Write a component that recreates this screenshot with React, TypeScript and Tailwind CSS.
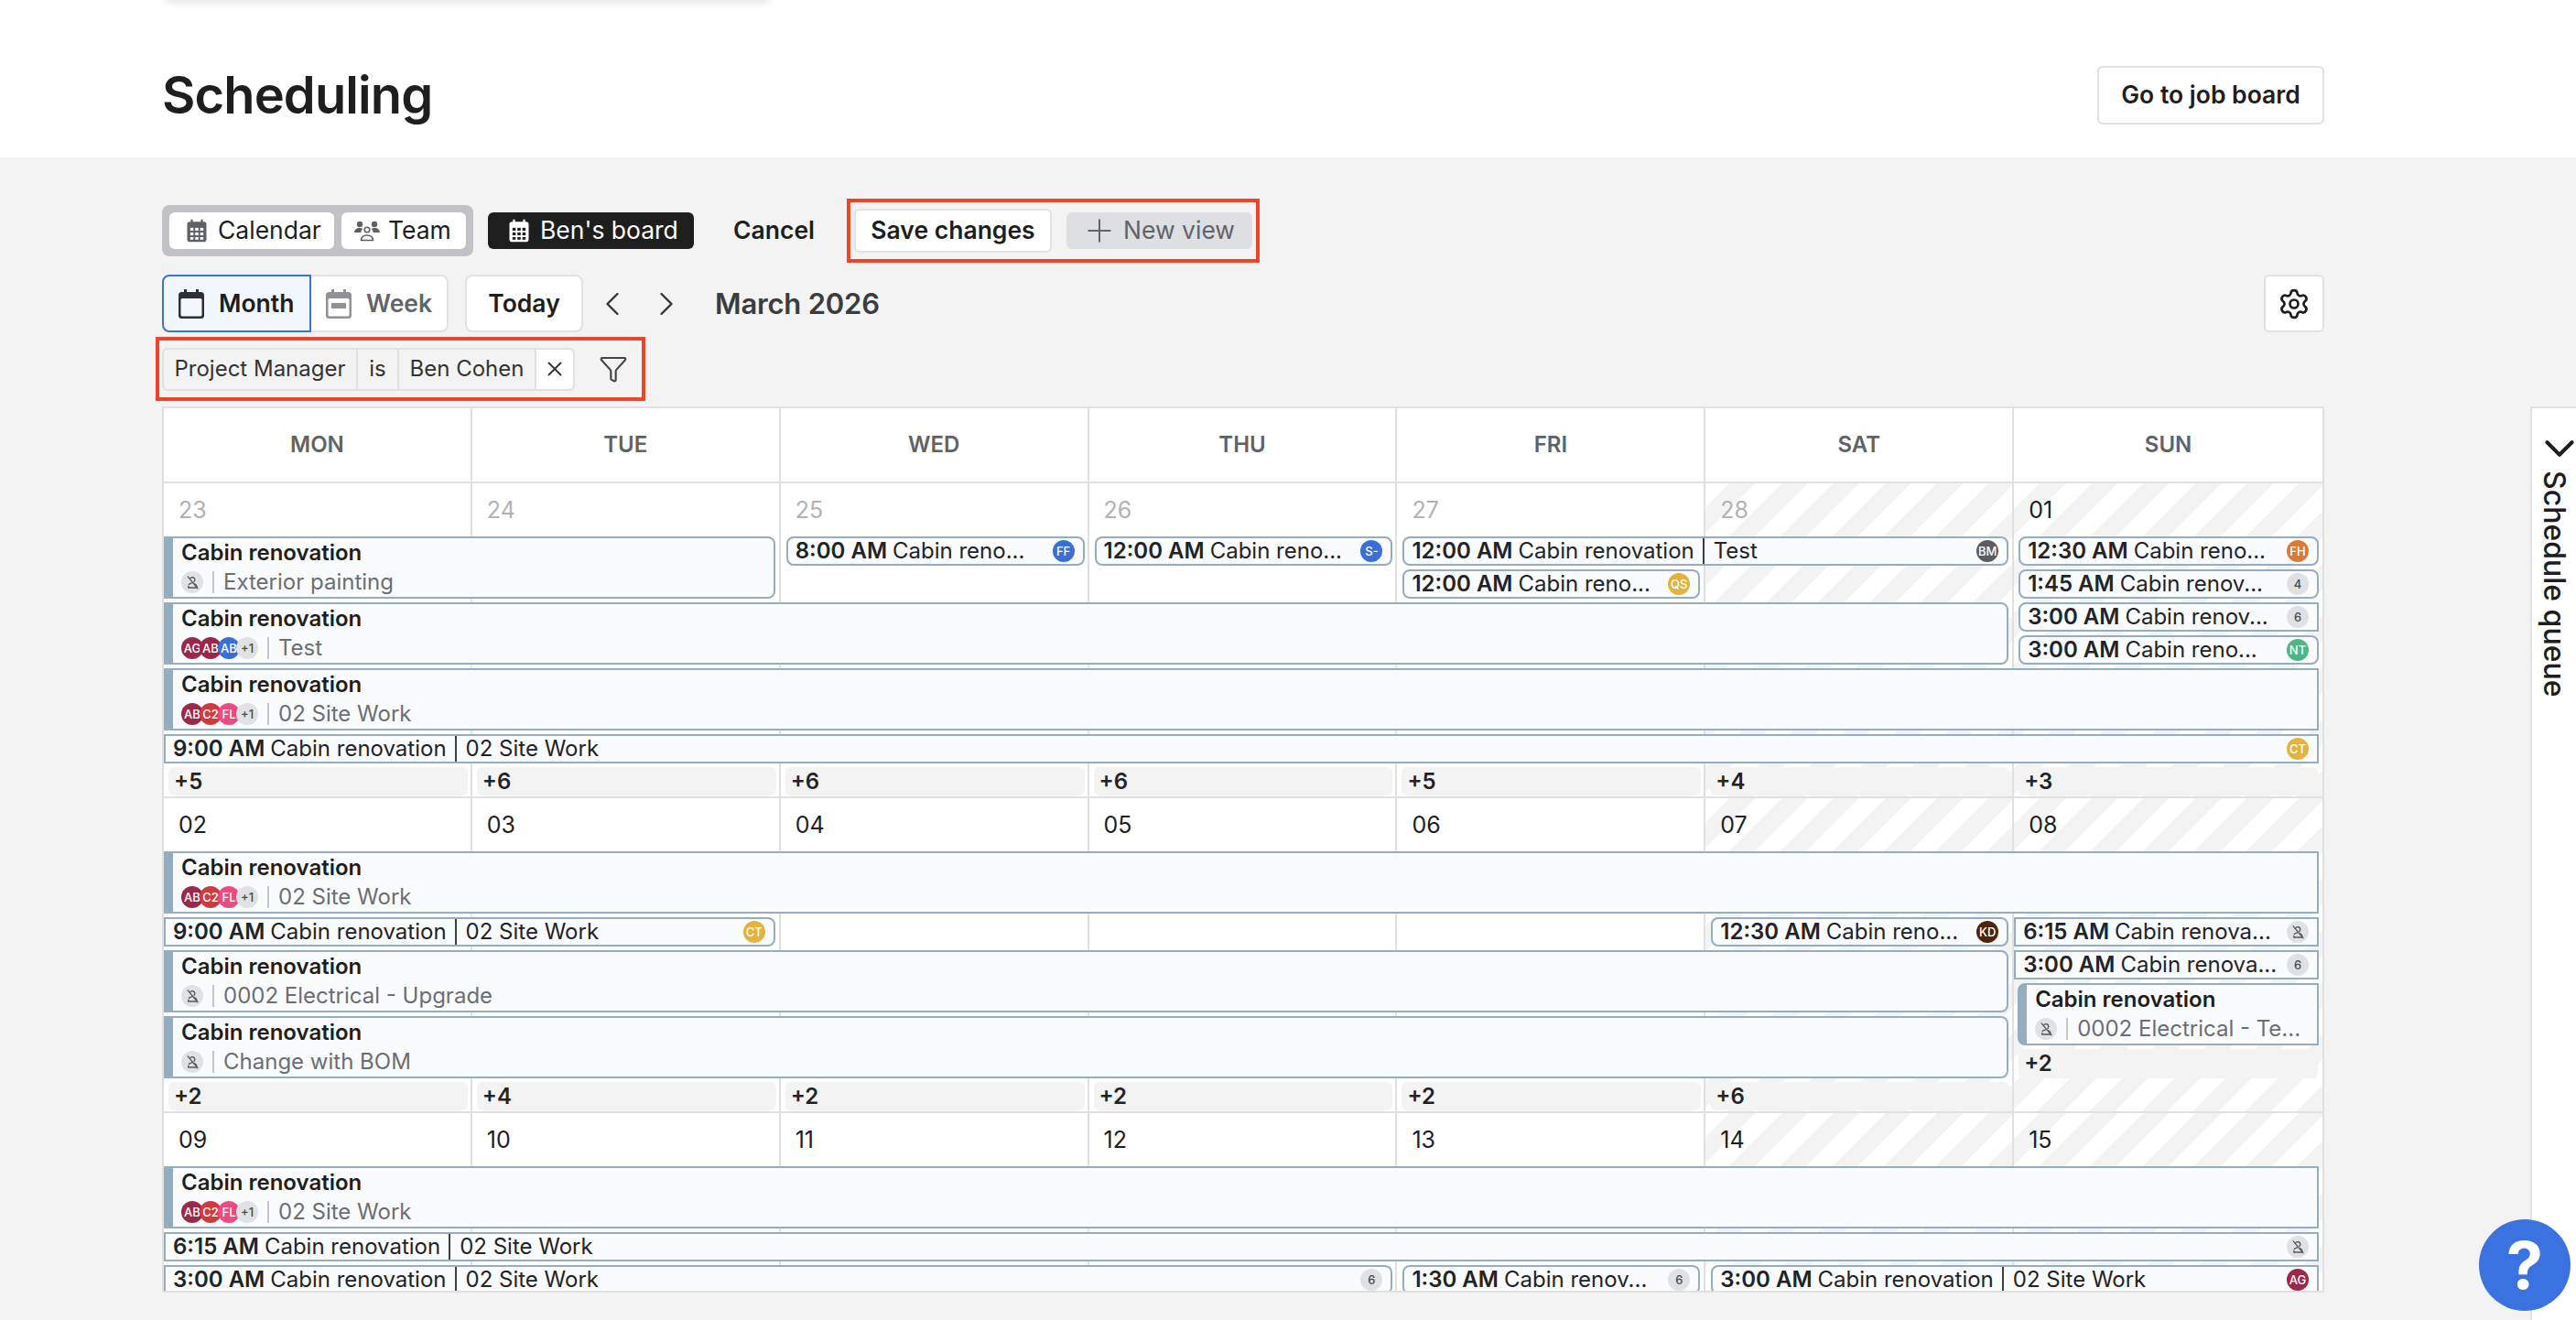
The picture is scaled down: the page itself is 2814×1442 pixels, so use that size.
import { ChevronDown, ChevronLeft, ChevronRight, Filter, Plus, Settings, X } from 'lucide-react'
import type { ReactNode } from 'react'

type Av = { t: string; c?: string } | 'none'

const CRIMSON = 'bg-[#9c2748]'

function NoUser() {
  return (
    <span className="flex h-[24px] w-[24px] shrink-0 items-center justify-center rounded-full bg-[#e0e1e5]">
      <svg viewBox="0 0 16 16" className="h-[17px] w-[17px]" fill="none" stroke="#55585c" strokeWidth="1.3" strokeLinecap="round">
        <path d="M5.6 3.4a2.6 2.6 0 0 1 4.6 1.6c0 .8-.3 1.4-.8 1.9" />
        <path d="M4 9.8c1-.9 2.1-1.3 3.3-1.4M9.6 9c1.2.3 2.2 1.2 2.6 2.6v1.6H3.6v-1.6" />
        <path d="M3 1.8l10 12" />
      </svg>
    </span>
  )
}

function Avatar({ a, stacked }: { a: Av; stacked?: boolean }) {
  if (a === 'none') return <NoUser />
  return (
    <span
      className={`flex h-[24px] w-[24px] shrink-0 items-center justify-center overflow-hidden rounded-full text-[13px] font-medium leading-none ${
        stacked ? 'ml-[-4px] first:ml-0' : ''
      } ${a.c ?? 'bg-[#e0e1e5] text-[#45484c]'} ${a.c ? 'text-white' : ''}`}
    >
      {a.t}
    </span>
  )
}

// two line bar with the accent on the left
function Bar({ pos, sub, avs, shape = '' }: { pos: string; sub: string; avs: Av[]; shape?: string }) {
  return (
    <div className={`${pos} z-10 flex min-w-0 flex-col border-2 border-l-[10px] border-[#94aebf] bg-[#fafbfd] pl-[9px] ${shape}`}>
      <div className="mt-[1px] truncate text-[24px] font-semibold leading-[30px] text-[#1e1e1e]">Cabin renovation</div>
      <div className="mt-[2px] flex items-center">
        <span className="flex">
          {avs.map((a, i) => (
            <Avatar key={i} a={a} stacked />
          ))}
        </span>
        <span className="mx-[10px] h-[24px] w-[2px] bg-[#c6c6c8]" />
        <span className="truncate text-[24px] leading-[30px] text-[#6b6e73]">{sub}</span>
      </div>
    </div>
  )
}

// one line event, with an optional second part after a divider
function Chip({ pos, time, title, sub, av, shape = 'rounded-[8px]' }: { pos: string; time: string; title: string; sub?: string; av?: Av; shape?: string }) {
  return (
    <div className={`${pos} z-10 flex min-w-0 items-center border-2 border-[#94aebf] bg-[#fafbfd] pl-[8px] pr-[9px] text-[24px] leading-[28px] text-[#222326] ${shape}`}>
      {time && <span className="mr-[6px] shrink-0 font-semibold">{time}</span>}
      <span className="shrink-0 whitespace-nowrap">{title}</span>
      {sub && (
        <>
          <span className="ml-[9px] mr-[10px] h-full w-[2px] shrink-0 bg-[#3c3f42]" />
          <span className="shrink-0 whitespace-nowrap">{sub}</span>
        </>
      )}
      <span className="flex-1" />
      {av && <Avatar a={av} />}
    </div>
  )
}

function More({ col, n }: { col: string; n: string }) {
  return (
    <div className={`${col} row-start-9 z-10 mx-[5px] mb-[1px] flex items-center rounded-[6px] bg-[#f3f3f3] pl-[6px] text-[24px] font-semibold leading-none text-[#222326]`}>
      {n}
    </div>
  )
}

const cols = ['col-start-1', 'col-start-2', 'col-start-3', 'col-start-4', 'col-start-5', 'col-start-6', 'col-start-7']

function Week({ dates, muted = 0, children }: { dates: string[]; muted?: number; children: ReactNode }) {
  return (
    <div className="grid h-[344px] shrink-0 grid-cols-7 grid-rows-[54px_repeat(8,32px)] gap-y-[4px] border-b-2 border-[#e0e0e0]">
      {dates.map((d, i) => (
        <div
          key={d}
          className={`${cols[i]} row-start-1 row-span-9 border-[#e0e0e0] ${i < 6 ? 'border-r-2' : ''} ${
            i > 4 ? 'bg-[repeating-linear-gradient(-45deg,#f3f3f3_0,#f3f3f3_20px,#ffffff_20px,#ffffff_40px)]' : 'bg-white'
          }`}
        />
      ))}
      {dates.map((d, i) => (
        <div key={d} className={`${cols[i]} row-start-1 z-10 pl-[16px] pt-[13px] text-[25px] leading-[32px] ${i < muted ? 'text-[#b2b2b4]' : 'text-[#1e1e1e]'}`}>
          {d}
        </div>
      ))}
      {children}
    </div>
  )
}

const SITE: Av[] = [
  { t: 'AB', c: CRIMSON },
  { t: 'C2', c: 'bg-[#cf3a3c]' },
  { t: 'FL', c: 'bg-[#ec4a80]' },
  { t: '+1' },
]

function CalIcon({ className, cut }: { className: string; cut: string }) {
  return (
    <svg viewBox="0 0 16 16" className={className} fill="currentColor">
      <path d="M4.2 1h1.3v1.4h5V1h1.3v1.4h.7c.8 0 1.500.7 1.500 1.500v9.600c0 .8-.7 1.500-1.500 1.500H3.500c-.8 0-1.500-.7-1.500-1.500V3.900c0-.8.7-1.500 1.500-1.500h.7z" />
      <g fill={cut}>
        <rect x="3.9" y="6.200" width="2" height="1.800" />
        <rect x="7" y="6.200" width="2" height="1.800" />
        <rect x="10.100" y="6.200" width="2" height="1.800" />
        <rect x="3.9" y="9.100" width="2" height="1.800" />
        <rect x="7" y="9.100" width="2" height="1.800" />
        <rect x="10.100" y="9.100" width="2" height="1.800" />
        <rect x="3.9" y="12" width="2" height="1.600" />
        <rect x="7" y="12" width="2" height="1.600" />
        <rect x="10.100" y="12" width="2" height="1.600" />
      </g>
    </svg>
  )
}

export default function App() {
  return (
    <div className="relative flex h-[1442px] flex-col overflow-hidden bg-white font-['Inter',sans-serif] text-[#1e1e1e]">
      <div className="absolute left-[180px] top-[-6px] h-[6px] w-[660px] shadow-[0_2px_8px_rgba(0,0,0,0.14)]" />

      <header className="flex h-[172px] shrink-0 items-center justify-between pl-[177px] pr-[275px] pt-[36px]">
        <h1 className="text-[56px] font-semibold leading-none tracking-[-0.9px] text-[#1e1e1e]">Scheduling</h1>
        <button className="h-[64px] w-[248px] rounded-[6px] border-2 border-[#e0e0e5] text-[26.5px] font-semibold">Go to job board</button>
      </header>

      <main className="flex min-h-0 flex-1 bg-[#f3f3f3]">
        <div className="w-[2764px] shrink-0 pl-[177px] pr-[225px] pt-[45px]">
          {/* view tabs */}
          <div className="flex h-[70px] items-center">
            <div className="flex h-[56px] items-center gap-[8px] rounded-[8px] bg-[#c2c2c6] px-[8px] text-[26.5px]">
              <span className="flex h-[40px] w-[180px] items-center gap-[9px] rounded-[6px] bg-white pl-[16px]">
                <CalIcon className="h-[28px] w-[28px] text-[#5d6064]" cut="#fff" /> Calendar
              </span>
              <span className="flex h-[40px] w-[136px] items-center gap-[8px] rounded-[6px] bg-white pl-[13px]">
                <svg viewBox="0 0 30 24" className="h-[24px] w-[30px] text-[#5d6064]" fill="currentColor">
                  <circle cx="7" cy="5" r="3.2" />
                  <circle cx="23" cy="5" r="3.2" />
                  <path d="M1 14c0-3 2.500-5 6-5 1.400 0 2.600.3 3.500.9-1.300 1-2 2.300-2.200 4.100z" />
                  <path d="M29 14c0-3-2.500-5-6-5-1.400 0-2.600.3-3.500.9 1.300 1 2 2.300 2.200 4.100z" />
                  <circle cx="15" cy="11" r="2.800" fill="none" stroke="currentColor" strokeWidth="1.600" />
                  <path d="M8.500 22.500c0-3.500 2.800-5.500 6.500-5.500s6.500 2 6.500 5.500z" fill="none" stroke="currentColor" strokeWidth="1.600" />
                </svg>
                Team
              </span>
            </div>
            <span className="ml-[16px] flex h-[40px] w-[225px] items-center gap-[9px] rounded-[6px] bg-[#1e1e1e] pl-[20px] text-[26.5px] text-white">
              <CalIcon className="h-[28px] w-[28px] text-white" cut="#1e1e1e" /> Ben's board
            </span>
            <span className="ml-[43px] text-[26.5px] font-semibold">Cancel</span>
            <div className="ml-[35px] flex h-[70px] w-[451px] items-center border-4 border-[#ee4427] pl-[4px]">
              <button className="h-[48px] w-[216px] rounded-[6px] border-2 border-[#e0e0e5] bg-white text-[26.5px] font-semibold">Save changes</button>
              <span className="ml-[16px] flex h-[40px] w-[203px] items-center gap-[6px] rounded-[6px] bg-[#dedfe3] pl-[16px] text-[26.5px] text-[#606368]">
                <Plus size={40} strokeWidth={1.2} /> New view
              </span>
            </div>
          </div>

          {/* month row */}
          <div className="mt-[13px] flex h-[63px] items-center">
            <span className="z-10 flex h-full w-[163px] items-center gap-[16px] rounded-l-[8px] border-2 border-[#3a73e0] bg-[#f2f6fe] pl-[16px] text-[26.5px] font-semibold">
              <svg viewBox="0 0 28 32" className="h-[32px] w-[28px] text-[#2e3033]" fill="currentColor">
                <path d="M6 0h3v3h10V0h3v3h2.500A3.500 3.500 0 0 1 28 6.500v22a3.500 3.500 0 0 1-3.500 3.500h-21A3.500 3.500 0 0 1 0 28.500v-22A3.500 3.500 0 0 1 3.500 3H6z" />
                <rect x="2.500" y="10" width="23" height="19.500" rx="1.500" fill="#f2f6fe" />
              </svg>
              Month
            </span>
            <span className="flex h-full w-[150px] items-center gap-[16px] rounded-r-[8px] border-2 border-l-0 border-[#e0e0e5] bg-white pl-[16px] text-[26.5px] font-semibold text-[#62656a]">
              <svg viewBox="0 0 28 32" className="h-[32px] w-[28px] text-[#8f9195]" fill="currentColor">
                <path d="M6 0h3v3h10V0h3v3h2.500A3.500 3.500 0 0 1 28 6.500v22a3.500 3.500 0 0 1-3.500 3.500h-21A3.500 3.500 0 0 1 0 28.500v-22A3.500 3.500 0 0 1 3.500 3H6z" />
                <rect x="2.500" y="10" width="23" height="19.500" rx="1.500" fill="#fff" />
                <rect x="6" y="15" width="16" height="6" />
              </svg>
              Week
            </span>
            <button className="ml-[18px] h-full w-[129px] rounded-[8px] border-2 border-[#e0e0e5] bg-white text-[26.5px] font-semibold">Today</button>
            <ChevronLeft size={44} strokeWidth={1.3} className="ml-[10px] text-[#333]" />
            <ChevronRight size={44} strokeWidth={1.3} className="ml-[15px] text-[#333]" />
            <span className="ml-[31px] pt-[2px] text-[31px] font-semibold tracking-[-0.2px] text-[#3a3d40]">March 2026</span>
            <button className="ml-auto flex h-full w-[66px] items-center justify-center rounded-[6px] border-2 border-[#e0e0e5] bg-white">
              <Settings size={36} strokeWidth={1.8} />
            </button>
          </div>

          {/* saved filter */}
          <div className="ml-[-7px] mt-[5px] flex h-[70px] w-[535px] items-center border-4 border-[#ee4427] pl-[3px]">
            <div className="flex h-[47px] items-stretch rounded-[6px] border-2 border-[#e0e0e5] bg-[#f3f3f3] text-[24px] text-[#333]">
              <span className="flex w-[212px] items-center justify-center border-r-2 border-[#e0e0e5]">Project Manager</span>
              <span className="flex w-[45px] items-center justify-center border-r-2 border-[#e0e0e5]">is</span>
              <span className="flex w-[150px] items-center justify-center border-r-2 border-[#e0e0e5]">Ben Cohen</span>
              <span className="flex w-[40px] items-center justify-center rounded-r-[6px] bg-white">
                <X size={26} strokeWidth={1.7} />
              </span>
            </div>
            <Filter size={32} strokeWidth={1.6} className="ml-[26px] text-[#444]" />
          </div>

          {/* calendar */}
          <div className="mt-[6px] flex h-[968px] flex-col overflow-hidden border-2 border-[#e0e0e0] bg-white">
            <div className="grid h-[82px] shrink-0 grid-cols-7 border-b-2 border-[#e0e0e0]">
              {['MON', 'TUE', 'WED', 'THU', 'FRI', 'SAT', 'SUN'].map((d, i) => (
                <div key={d} className={`flex items-center justify-center border-[#e0e0e0] pb-[1px] text-[24px] font-semibold text-[#5f6368] ${i < 6 ? 'border-r-2' : ''}`}>
                  {d}
                </div>
              ))}
            </div>

            <Week dates={['23', '24', '25', '26', '27', '28', '01']} muted={6}>
              <Bar pos="col-start-1 col-span-2 row-start-2 row-span-2 mr-[6px]" shape="rounded-r-[8px]" sub="Exterior painting" avs={['none']} />
              <Chip pos="col-start-3 row-start-2 ml-[6px] mr-[5px]" time="8:00 AM" title="Cabin reno..." av={{ t: 'FF', c: 'bg-[#3a6fd8]' }} />
              <Chip pos="col-start-4 row-start-2 ml-[6px] mr-[5px]" time="12:00 AM" title="Cabin reno..." av={{ t: 'S-', c: 'bg-[#3a6fd8]' }} />
              <Chip pos="col-start-5 col-span-2 row-start-2 ml-[6px] mr-[6px]" time="12:00 AM" title="Cabin renovation" sub="Test" av={{ t: 'BM', c: 'bg-[#5c5c60]' }} />
              <Chip pos="col-start-7 row-start-2 ml-[5px] mr-[4px]" time="12:30 AM" title="Cabin reno..." av={{ t: 'FH', c: 'bg-[#d97b38]' }} />
              <Chip pos="col-start-5 row-start-3 ml-[6px] mr-[6px]" time="12:00 AM" title="Cabin reno..." av={{ t: 'QS', c: 'bg-[#e3b33e]' }} />
              <Chip pos="col-start-7 row-start-3 ml-[5px] mr-[4px]" time="1:45 AM" title="Cabin renov..." av={{ t: '4' }} />
              <Bar
                pos="col-start-1 col-span-6 row-start-4 row-span-2 mr-[6px]"
                shape="rounded-r-[8px]"
                sub="Test"
                avs={[{ t: 'AG', c: CRIMSON }, { t: 'AB', c: CRIMSON }, { t: 'AB', c: 'bg-[#3a6fd8]' }, { t: '+1' }]}
              />
              <Chip pos="col-start-7 row-start-4 ml-[5px] mr-[4px]" shape="rounded-l-[8px]" time="3:00 AM" title="Cabin renov..." av={{ t: '6' }} />
              <Chip pos="col-start-7 row-start-5 ml-[5px] mr-[4px]" time="3:00 AM" title="Cabin reno..." av={{ t: 'NT', c: 'bg-[#4cb782]' }} />
              <Bar pos="col-start-1 col-span-7 row-start-6 row-span-2 mr-[4px]" sub="02 Site Work" avs={SITE} />
              <Chip pos="col-start-1 col-span-7 row-start-8 mr-[4px]" shape="" time="9:00 AM" title="Cabin renovation" sub="02 Site Work" av={{ t: 'CT', c: 'bg-[#e3b33e]' }} />
              <More col="col-start-1" n="+5" />
              <More col="col-start-2" n="+6" />
              <More col="col-start-3" n="+6" />
              <More col="col-start-4" n="+6" />
              <More col="col-start-5" n="+5" />
              <More col="col-start-6" n="+4" />
              <More col="col-start-7" n="+3" />
            </Week>

            <Week dates={['02', '03', '04', '05', '06', '07', '08']}>
              <Bar pos="col-start-1 col-span-7 row-start-2 row-span-2 mr-[4px]" sub="02 Site Work" avs={SITE} />
              <Chip pos="col-start-1 col-span-2 row-start-4 mr-[6px]" shape="rounded-r-[8px]" time="9:00 AM" title="Cabin renovation" sub="02 Site Work" av={{ t: 'CT', c: 'bg-[#e3b33e]' }} />
              <Chip pos="col-start-6 row-start-4 ml-[6px] mr-[6px]" time="12:30 AM" title="Cabin reno..." av={{ t: 'KD', c: 'bg-[#4f2408]' }} />
              <Chip pos="col-start-7 row-start-4 mr-[4px]" shape="" time="6:15 AM" title="Cabin renova..." av="none" />
              <Bar pos="col-start-1 col-span-6 row-start-5 row-span-2 mr-[6px]" shape="rounded-r-[8px]" sub="0002 Electrical - Upgrade" avs={['none']} />
              <Chip pos="col-start-7 row-start-5 mr-[4px]" shape="" time="3:00 AM" title="Cabin renova..." av={{ t: '6' }} />
              <Bar pos="col-start-7 row-start-6 row-span-2 ml-[4px] mr-[4px]" shape="rounded-l-[8px]" sub="0002 Electrical - Te..." avs={['none']} />
              <Bar pos="col-start-1 col-span-6 row-start-7 row-span-2 mr-[6px]" shape="rounded-r-[8px]" sub="Change with BOM" avs={['none']} />
              <div className="col-start-7 row-start-8 z-10 mx-[5px] flex items-center rounded-[6px] bg-[#f3f3f3] pl-[6px] text-[24px] font-semibold leading-none text-[#222326]">+2</div>
              <More col="col-start-1" n="+2" />
              <More col="col-start-2" n="+4" />
              <More col="col-start-3" n="+2" />
              <More col="col-start-4" n="+2" />
              <More col="col-start-5" n="+2" />
              <More col="col-start-6" n="+6" />
            </Week>

            <Week dates={['09', '10', '11', '12', '13', '14', '15']}>
              <Bar pos="col-start-1 col-span-7 row-start-2 row-span-2 mr-[4px]" sub="02 Site Work" avs={SITE} />
              <Chip pos="col-start-1 col-span-7 row-start-4 mr-[4px]" shape="" time="6:15 AM" title="Cabin renovation" sub="02 Site Work" av="none" />
              <Chip pos="col-start-1 col-span-4 row-start-5 mr-[5px]" shape="rounded-r-[8px]" time="3:00 AM" title="Cabin renovation" sub="02 Site Work" av={{ t: '6' }} />
              <Chip pos="col-start-5 row-start-5 ml-[6px] mr-[6px]" time="1:30 AM" title="Cabin renov..." av={{ t: '6' }} />
              <Chip pos="col-start-6 col-span-2 row-start-5 ml-[6px] mr-[4px]" shape="rounded-l-[8px]" time="3:00 AM" title="Cabin renovation" sub="02 Site Work" av={{ t: 'AG', c: CRIMSON }} />
            </Week>
          </div>
        </div>

        {/* schedule queue rail */}
        <aside className="mt-[272px] flex flex-1 flex-col items-start rounded-tl-[2px] border-l-2 border-t-2 border-[#e0e0e5] bg-white pt-[17px]">
          <ChevronDown size={54} strokeWidth={1.8} className="ml-[3px] shrink-0 text-[#1e1e1e]" />
          <span className="ml-[8px] mt-[-3px] text-[32px] font-medium leading-none [writing-mode:vertical-rl]">Schedule queue</span>
        </aside>
      </main>

      <button className="absolute bottom-[10px] right-[6px] flex h-[100px] w-[100px] items-center justify-center rounded-full bg-[#3a73e0] text-[72px] font-bold leading-none text-white">
        ?
      </button>
    </div>
  )
}
